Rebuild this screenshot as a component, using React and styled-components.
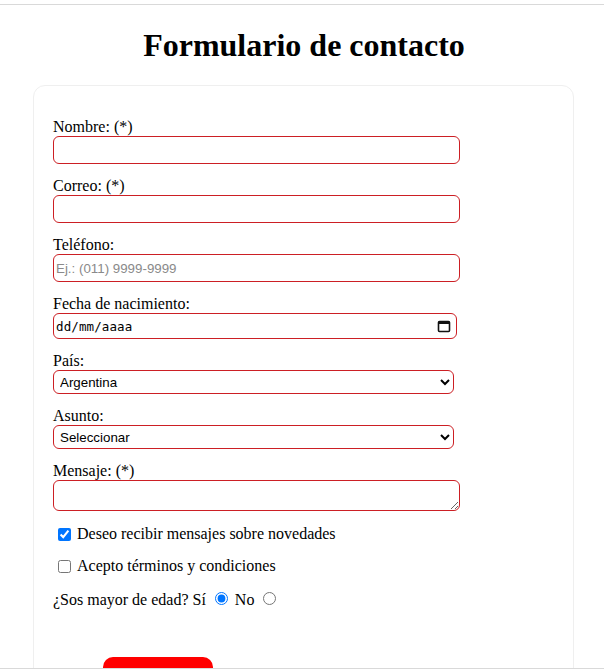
import React from "react";
import styled, { createGlobalStyle } from "styled-components";

const GlobalStyle = createGlobalStyle`
  body {
    margin: 0;
    background: #ffffff;
    font-family: "Liberation Serif", "Times New Roman", serif;
    color: #000000;
  }
`;

const TopRule = styled.div`
  margin-top: 4px;
  height: 1px;
  background-color: #d9d9d9;
`;

const BottomRule = styled.div`
  position: fixed;
  left: 0;
  right: 0;
  bottom: 0;
  height: 1px;
  background-color: #d9d9d9;
`;

const Title = styled.h1`
  margin: 23px 0 22px;
  padding-left: 4px;
  font-size: 32px;
  line-height: 35px;
  font-weight: bold;
  text-align: center;
`;

const Card = styled.form`
  width: 541px;
  box-sizing: border-box;
  margin-left: 33px;
  padding: 32px 19px 60px;
  border: 1px solid #efefef;
  border-radius: 12px;
`;

const Field = styled.div`
  margin-bottom: 13px;
`;

const Label = styled.label`
  display: block;
  font-size: 16px;
  line-height: 18px;
`;

const controlBase = `
  display: block;
  box-sizing: border-box;
  margin: 0;
  border: 1px solid #cc1f24;
  border-radius: 6px;
  background-color: #ffffff;
  font-family: "Liberation Sans", Arial, sans-serif;
  font-size: 13.33px;
  color: #000000;
  outline: none;
`;

const TextInput = styled.input`
  ${controlBase}
  width: 407px;
  height: 28px;
  padding: 1px 2px;
  &::placeholder {
    color: #8a8a8a;
  }
`;

const DateBox = styled.div`
  ${controlBase}
  width: 404px;
  height: 26px;
  display: flex;
  align-items: center;
  justify-content: space-between;
  padding: 0 5px 0 2px;
`;

const DateText = styled.span`
  font-family: "DejaVu Sans Mono", "Liberation Mono", monospace;
  font-size: 12.5px;
  letter-spacing: 0.1px;
`;

const Select = styled.select`
  ${controlBase}
  width: ${(p) => p.$w}px;
  height: 24px;
  padding: 0 2px;
`;

const TextArea = styled.textarea`
  ${controlBase}
  width: 407px;
  height: 31px;
  padding: 2px;
  resize: vertical;
`;

const Options = styled.div`
  display: flex;
  flex-direction: column;
  gap: 14px;
  padding-top: 1px;
`;

const CheckRow = styled.label`
  display: flex;
  align-items: center;
  height: 18px;
  font-size: 16px;
  line-height: 18px;
`;

const Check = styled.input`
  width: 13px;
  height: 13px;
  margin: 0 6px 0 5px;
`;

const RadioRow = styled.div`
  height: 18px;
  font-size: 16px;
  line-height: 18px;
  white-space: nowrap;
`;

const Radio = styled.input`
  width: 13px;
  height: 13px;
  margin: 3px 3px 0 5px;
`;

const SubmitButton = styled.button`
  display: block;
  margin: 50px 0 0 50px;
  width: 110px;
  height: 56px;
  border: none;
  border-radius: 10px;
  background-color: #ff0000;
  color: #ffffff;
  font-family: "Liberation Sans", Arial, sans-serif;
  font-size: 16px;
`;

function CalendarIcon() {
  return (
    <svg width="14" height="14" viewBox="0 0 14 14">
      <rect x="1.5" y="2.5" width="11" height="10" rx="1" fill="none" stroke="#111" strokeWidth="1.6" />
      <rect x="1.5" y="2.5" width="11" height="2.5" fill="#111" />
    </svg>
  );
}

export default function App() {
  return (
    <>
      <GlobalStyle />
      <TopRule />
      <Title>Formulario de contacto</Title>
      <Card onSubmit={(e) => e.preventDefault()}>
        <Field>
          <Label htmlFor="nombre">Nombre: (*)</Label>
          <TextInput id="nombre" type="text" />
        </Field>
        <Field>
          <Label htmlFor="correo">Correo: (*)</Label>
          <TextInput id="correo" type="email" />
        </Field>
        <Field>
          <Label htmlFor="telefono">Teléfono:</Label>
          <TextInput id="telefono" type="tel" placeholder="Ej.: (011) 9999-9999" />
        </Field>
        <Field>
          <Label>Fecha de nacimiento:</Label>
          <DateBox>
            <DateText>dd/mm/aaaa</DateText>
            <CalendarIcon />
          </DateBox>
        </Field>
        <Field>
          <Label htmlFor="pais">País:</Label>
          <Select id="pais" $w={401} defaultValue="ar">
            <option value="ar">Argentina</option>
            <option value="uy">Uruguay</option>
            <option value="cl">Chile</option>
          </Select>
        </Field>
        <Field>
          <Label htmlFor="asunto">Asunto:</Label>
          <Select id="asunto" $w={401} defaultValue="">
            <option value="">Seleccionar</option>
            <option value="consulta">Consulta</option>
            <option value="reclamo">Reclamo</option>
          </Select>
        </Field>
        <Field>
          <Label htmlFor="mensaje">Mensaje: (*)</Label>
          <TextArea id="mensaje" />
        </Field>
        <Options>
          <CheckRow>
            <Check type="checkbox" defaultChecked />
            Deseo recibir mensajes sobre novedades
          </CheckRow>
          <CheckRow>
            <Check type="checkbox" />
            Acepto términos y condiciones
          </CheckRow>
          <RadioRow>
            ¿Sos mayor de edad? Sí <Radio type="radio" name="edad" defaultChecked /> No{" "}
            <Radio type="radio" name="edad" />
          </RadioRow>
        </Options>
        <SubmitButton type="submit">Enviar</SubmitButton>
      </Card>
      <BottomRule />
    </>
  );
}
